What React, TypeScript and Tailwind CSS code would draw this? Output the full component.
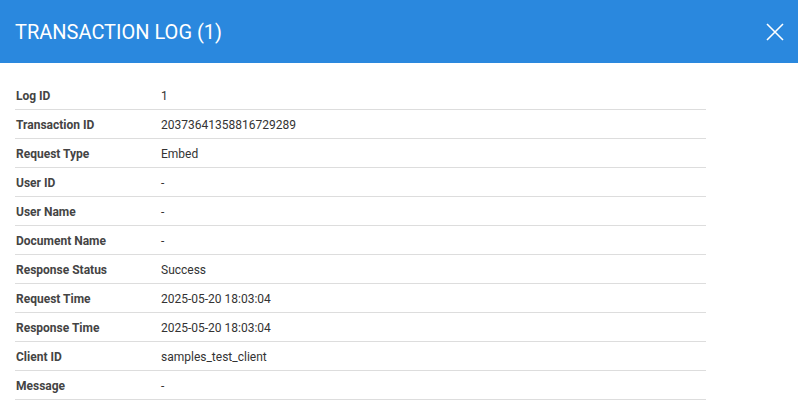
import React from "react";

const rows: [string, string][] = [
  ["Log ID", "1"],
  ["Transaction ID", "20373641358816729289"],
  ["Request Type", "Embed"],
  ["User ID", "-"],
  ["User Name", "-"],
  ["Document Name", "-"],
  ["Response Status", "Success"],
  ["Request Time", "2025-05-20 18:03:04"],
  ["Response Time", "2025-05-20 18:03:04"],
  ["Client ID", "samples_test_client"],
  ["Message", "-"],
];

export default function App() {
  return (
    <div className="w-[798px] h-[415px] bg-white overflow-hidden" style={{ fontFamily: "Roboto, 'Liberation Sans', sans-serif" }}>
      <div className="h-[63px] bg-[#2a88de] flex items-center justify-between pl-[15px] pr-[14px]">
        <h1 className="text-white text-[20px] font-normal">TRANSACTION LOG (1)</h1>
        <svg width="18" height="18" viewBox="0 0 18 18" className="mt-[1px]">
          <path d="M1 1 L17 17 M17 1 L1 17" stroke="white" strokeWidth="1.6" fill="none" />
        </svg>
      </div>
      <div className="pt-[18px] pl-[15px]">
        <div className="w-[691px]">
          {rows.map(([k, v]) => (
            <div key={k} className="flex h-[29px] items-center pt-[1px] border-b border-[#dddddd]">
              <div className="w-[146px] pl-[1px] text-[12px] font-bold text-[#444444]">{k}</div>
              <div className="text-[12px] text-[#333333]">{v}</div>
            </div>
          ))}
        </div>
      </div>
    </div>
  );
}
